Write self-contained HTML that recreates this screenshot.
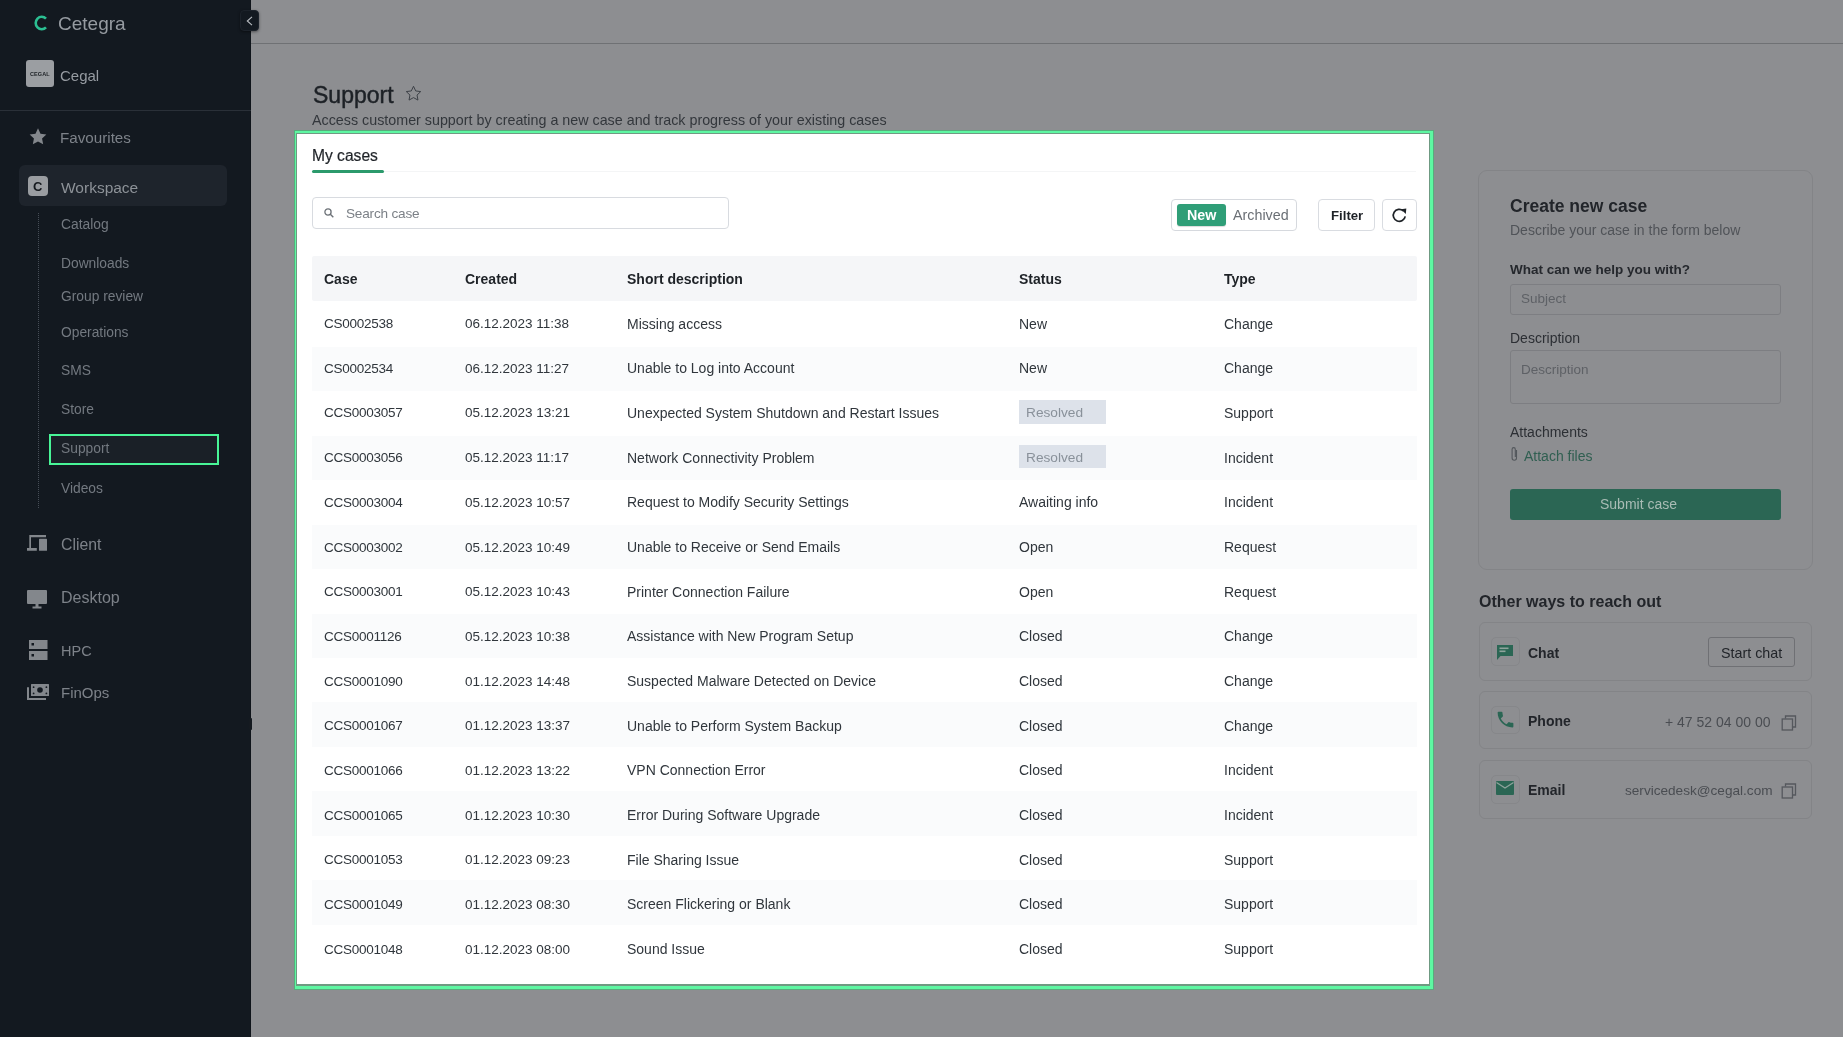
<!DOCTYPE html>
<html><head><meta charset="utf-8"><title>Support</title>
<style>
html,body{margin:0;padding:0;}
body{width:1843px;height:1037px;position:relative;overflow:hidden;background:#8d8e91;font-family:"Liberation Sans",sans-serif;}
.t{position:absolute;line-height:1;white-space:nowrap;-webkit-font-smoothing:antialiased;will-change:transform;}
.r{position:absolute;box-sizing:border-box;}
svg{position:absolute;overflow:visible;}
</style></head><body>
<div class="r" style="left:0.0px;top:0.0px;width:251.0px;height:1037.0px;background:#131920;"></div>
<div class="r" style="left:249.5px;top:0.0px;width:1.5px;height:1037.0px;background:#0f141a;"></div>
<div class="r" style="left:249.0px;top:718.0px;width:2.8px;height:12.0px;background:#151a20;border-radius:1px;"></div>
<svg style="left:34px;top:15px" width="14" height="16" viewBox="0 0 14 16"><path d="M12 3.6 A6 6.3 0 1 0 12 12.4" fill="none" stroke="#2bbf92" stroke-width="2.6"/></svg>
<div class="t" style="left:57.7px;top:14.1px;font-size:19px;color:#969ba1;font-weight:400;">Cetegra</div>
<div class="r" style="left:26.0px;top:60.0px;width:27.5px;height:27.3px;background:#9b9ea2;border-radius:3px;"></div>
<div class="t" style="left:29.5px;top:71.8px;font-size:5.5px;color:#1b1f24;font-weight:700;letter-spacing:0.1px">CEGAL</div>
<div class="t" style="left:60.0px;top:67.9px;font-size:15px;color:#969ba1;font-weight:400;">Cegal</div>
<div class="r" style="left:0.0px;top:110.3px;width:251.0px;height:1.2px;background:#2a3038;"></div>
<svg style="left:28.5px;top:127.5px" width="18" height="17" viewBox="0 0 24 23"><path d="M12 0.5l3.4 7.2 7.9 1-5.8 5.4 1.5 7.8L12 18.1 5 21.9l1.5-7.8L0.7 8.7l7.9-1z" fill="#83878c"/></svg>
<div class="t" style="left:60.2px;top:130.0px;font-size:15.2px;color:#7d8289;font-weight:400;">Favourites</div>
<div class="r" style="left:19.0px;top:165.0px;width:208.0px;height:41.0px;background:#1e242c;border-radius:6px;"></div>
<div class="r" style="left:28.0px;top:176.0px;width:20.0px;height:20.0px;background:#9a9da1;border-radius:4px;"></div>
<div class="t" style="left:32.6px;top:180.2px;font-size:13px;color:#15191e;font-weight:700;">C</div>
<div class="t" style="left:60.6px;top:179.7px;font-size:15.5px;color:#8d9298;font-weight:400;">Workspace</div>
<div class="r" style="left:37.5px;top:213.0px;width:1.0px;height:295.0px;border-left:1px dotted #464d56;"></div>
<div class="r" style="left:49.4px;top:433.5px;width:169.6px;height:31.8px;border:2px solid #48f597;background:#1a2027;"></div>
<div class="t" style="left:61.2px;top:218.4px;font-size:13.8px;color:#737980;font-weight:400;">Catalog</div>
<div class="t" style="left:61.2px;top:256.9px;font-size:13.8px;color:#737980;font-weight:400;">Downloads</div>
<div class="t" style="left:61.2px;top:289.9px;font-size:13.8px;color:#737980;font-weight:400;">Group review</div>
<div class="t" style="left:61.2px;top:326.3px;font-size:13.8px;color:#737980;font-weight:400;">Operations</div>
<div class="t" style="left:61.2px;top:364.3px;font-size:13.8px;color:#737980;font-weight:400;">SMS</div>
<div class="t" style="left:61.2px;top:403.4px;font-size:13.8px;color:#737980;font-weight:400;">Store</div>
<div class="t" style="left:61.2px;top:442.0px;font-size:13.8px;color:#737980;font-weight:400;">Support</div>
<div class="t" style="left:61.2px;top:482.1px;font-size:13.8px;color:#737980;font-weight:400;">Videos</div>
<svg style="left:0;top:0" width="60" height="560" viewBox="0 0 60 560"><path d="M29.3 535h16.7v2.2H31V548h5.8v2.8H27V548h2.3z" fill="#83878c"/><rect x="39" y="538.8" width="8" height="12" rx="0.6" fill="#83878c"/></svg>
<div class="t" style="left:60.7px;top:536.9px;font-size:15.8px;color:#7d8289;font-weight:400;">Client</div>
<svg style="left:27px;top:589.5px" width="20" height="18.5" viewBox="0 0 20 18.5"><rect x="0" y="0" width="20" height="14" rx="1" fill="#83878c"/><rect x="8.5" y="14" width="3" height="3" fill="#83878c"/><rect x="5.5" y="16.5" width="9" height="2" fill="#83878c"/></svg>
<div class="t" style="left:60.7px;top:589.6px;font-size:16px;color:#7d8289;font-weight:400;">Desktop</div>
<svg style="left:29px;top:640px" width="18.5" height="20" viewBox="0 0 18.5 20"><rect x="0" y="0" width="18.5" height="9" fill="#83878c"/><rect x="0" y="11" width="18.5" height="9" fill="#83878c"/><rect x="2.5" y="3" width="2.5" height="2.5" fill="#131920"/><rect x="2.5" y="14" width="2.5" height="2.5" fill="#131920"/></svg>
<div class="t" style="left:61.4px;top:643.8px;font-size:14.5px;color:#7d8289;font-weight:400;">HPC</div>
<svg style="left:0;top:0" width="60" height="710" viewBox="0 0 60 710"><rect x="31" y="684" width="18" height="12" rx="0.5" fill="#83878c"/><circle cx="40" cy="690" r="2.8" fill="#131920"/><circle cx="33.6" cy="687.2" r="0.9" fill="#131920"/><circle cx="46.4" cy="687.2" r="0.9" fill="#131920"/><circle cx="33.6" cy="693.4" r="0.9" fill="#131920"/><circle cx="46.4" cy="693.4" r="0.9" fill="#131920"/><path d="M27 687.2h2V698h17v2H27z" fill="#83878c"/></svg>
<div class="t" style="left:61.4px;top:685.3px;font-size:15px;color:#7d8289;font-weight:400;">FinOps</div>
<div class="r" style="left:239.5px;top:10.0px;width:19.5px;height:21.0px;background:#131920;border-radius:4px;border:1px solid #1c222a;box-shadow:0 1px 3px rgba(0,0,0,0.45);"></div>
<svg style="left:245px;top:15px" width="8" height="11" viewBox="0 0 8 11"><path d="M7 1.8L2.3 6 7 10.2" fill="none" stroke="#b9bdc2" stroke-width="1.1"/></svg>
<div class="r" style="left:251.0px;top:43.0px;width:1592.0px;height:1.0px;background:#6f7174;"></div>
<div class="t" style="left:312.5px;top:83.5px;font-size:23px;color:#1d2126;font-weight:400;-webkit-text-stroke:0.45px #1d2126;">Support</div>
<svg style="left:404.5px;top:85px" width="17" height="17" viewBox="0 0 24 24"><path d="M12 1.8l3.1 6.6 7.1.9-5.2 4.9 1.3 7.1L12 17.8l-6.3 3.5 1.3-7.1L1.8 9.3l7.1-.9z" fill="none" stroke="#3c4046" stroke-width="1.4" stroke-linejoin="round"/></svg>
<div class="t" style="left:312.3px;top:113.1px;font-size:14.3px;color:#33373c;font-weight:400;">Access customer support by creating a new case and track progress of your existing cases</div>
<div class="r" style="left:1478.3px;top:170.3px;width:334.4px;height:399.3px;border:1px solid #838487;border-radius:9px;"></div>
<div class="t" style="left:1509.6px;top:198.3px;font-size:17.5px;color:#22252a;font-weight:700;">Create new case</div>
<div class="t" style="left:1509.6px;top:223.1px;font-size:14px;color:#505358;font-weight:400;">Describe your case in the form below</div>
<div class="t" style="left:1509.6px;top:262.9px;font-size:13.5px;color:#25282d;font-weight:700;">What can we help you with?</div>
<div class="r" style="left:1509.6px;top:283.8px;width:271.1px;height:31.2px;border:1px solid #7d7e82;border-radius:3px;"></div>
<div class="t" style="left:1520.6px;top:292.2px;font-size:13.5px;color:#5e6166;font-weight:400;">Subject</div>
<div class="t" style="left:1509.6px;top:330.6px;font-size:14px;color:#2c2f34;font-weight:400;">Description</div>
<div class="r" style="left:1509.6px;top:349.8px;width:271.1px;height:54.6px;border:1px solid #7d7e82;border-radius:3px;"></div>
<div class="t" style="left:1520.6px;top:362.9px;font-size:13.5px;color:#5e6166;font-weight:400;">Description</div>
<div class="t" style="left:1509.6px;top:424.7px;font-size:14px;color:#2c2f34;font-weight:400;">Attachments</div>
<svg style="left:1509.5px;top:446px" width="9" height="16" viewBox="0 0 9 16"><path d="M6.5 4v8a2.2 2.2 0 0 1-4.4 0V3.2a1.6 1.6 0 0 1 3.2 0V11" fill="none" stroke="#53575c" stroke-width="1.1"/></svg>
<div class="t" style="left:1524.3px;top:448.5px;font-size:14px;color:#305f51;font-weight:400;">Attach files</div>
<div class="r" style="left:1509.9px;top:488.6px;width:271.1px;height:31.1px;background:#2b6654;border-radius:3px;"></div>
<div class="t" style="left:1600.0px;top:497.4px;font-size:14px;color:#a9bcb5;font-weight:400;">Submit case</div>
<div class="t" style="left:1478.6px;top:593.7px;font-size:16px;color:#22252a;font-weight:700;">Other ways to reach out</div>
<div class="r" style="left:1478.6px;top:621.8px;width:333.9px;height:59.4px;border:1px solid #838487;border-radius:6px;"></div>
<div class="r" style="left:1491.3px;top:637.1px;width:28.3px;height:28.8px;border:1px solid #86878a;border-radius:5px;"></div>
<div class="r" style="left:1478.6px;top:690.7px;width:333.9px;height:58.8px;border:1px solid #838487;border-radius:6px;"></div>
<div class="r" style="left:1491.3px;top:705.7px;width:28.3px;height:28.8px;border:1px solid #86878a;border-radius:5px;"></div>
<div class="r" style="left:1478.6px;top:759.5px;width:333.9px;height:59.4px;border:1px solid #838487;border-radius:6px;"></div>
<div class="r" style="left:1491.3px;top:774.8px;width:28.3px;height:28.8px;border:1px solid #86878a;border-radius:5px;"></div>
<div class="t" style="left:1527.7px;top:645.8px;font-size:14px;color:#22252a;font-weight:700;">Chat</div>
<div class="r" style="left:1708.0px;top:637.0px;width:87.2px;height:30.2px;border:1px solid #6f7074;border-radius:3px;"></div>
<div class="t" style="left:1720.5px;top:645.6px;font-size:14.3px;color:#22252a;font-weight:400;">Start chat</div>
<svg style="left:1496px;top:644px" width="18" height="17" viewBox="0 0 18 17"><path d="M1 1h16v11H4.5L1 16z" fill="#2b6654"/><rect x="3.5" y="3.5" width="9" height="1.6" fill="#8fa39c"/><rect x="3.5" y="6.5" width="6" height="1.6" fill="#8fa39c"/></svg>
<div class="t" style="left:1527.7px;top:714.1px;font-size:14px;color:#22252a;font-weight:700;">Phone</div>
<div class="t" style="left:1665.4px;top:714.6px;font-size:14px;color:#4a4d52;font-weight:400;">+ 47 52 04 00 00</div>
<svg style="left:1495px;top:709px" width="21" height="21" viewBox="0 0 24 24"><path d="M6.6 10.8c1.4 2.8 3.8 5.1 6.6 6.6l2.2-2.2c.3-.3.7-.4 1-.2 1.1.4 2.3.6 3.6.6.6 0 1 .4 1 1V20c0 .6-.4 1-1 1C10.6 21 3 13.4 3 4c0-.6.4-1 1-1h3.5c.6 0 1 .4 1 1 0 1.2.2 2.4.6 3.6.1.3 0 .7-.2 1z" fill="#2b6654"/></svg>
<div class="t" style="left:1527.7px;top:782.9px;font-size:14px;color:#22252a;font-weight:700;">Email</div>
<div class="t" style="left:1624.9px;top:783.8px;font-size:13.6px;color:#4a4d52;font-weight:400;">servicedesk@cegal.com</div>
<svg style="left:1496px;top:781px" width="18" height="14" viewBox="0 0 18 14"><rect x="0" y="0" width="18" height="14" rx="1" fill="#2b6654"/><path d="M0.5 1.5L9 7l8.5-5.5" fill="none" stroke="#8fa39c" stroke-width="1.3"/></svg>
<svg style="left:1780.6px;top:715px" width="16" height="16" viewBox="0 0 16 16"><path d="M4.5 3.5V1h10v11h-2.5" fill="none" stroke="#55585d" stroke-width="1.3"/><rect x="1.2" y="4" width="10.3" height="11" fill="none" stroke="#55585d" stroke-width="1.3"/></svg>
<svg style="left:1780.6px;top:783px" width="16" height="16" viewBox="0 0 16 16"><path d="M4.5 3.5V1h10v11h-2.5" fill="none" stroke="#55585d" stroke-width="1.3"/><rect x="1.2" y="4" width="10.3" height="11" fill="none" stroke="#55585d" stroke-width="1.3"/></svg>
<div class="r" style="left:294.0px;top:130.0px;width:1140.0px;height:860.0px;background:#58ab7c;"></div>
<div class="r" style="left:294.6px;top:130.8px;width:1138.8px;height:858.4px;background:#5ef7a2;"></div>
<div class="r" style="left:296.0px;top:133.0px;width:1134.0px;height:853.0px;background:#6f9a82;"></div>
<div class="r" style="left:297.0px;top:134.0px;width:1132.0px;height:850.0px;background:#ffffff;"></div>
<div class="t" style="left:312.3px;top:147.5px;font-size:15.6px;color:#1e2227;font-weight:400;-webkit-text-stroke:0.2px #1e2227;">My cases</div>
<div class="r" style="left:384.0px;top:171.0px;width:1032.0px;height:1.0px;background:#f4f5f6;"></div>
<div class="r" style="left:312.0px;top:170.0px;width:72.0px;height:3.0px;background:#2b9a6c;border-radius:1.5px;"></div>
<div class="r" style="left:312.0px;top:197.0px;width:416.5px;height:31.5px;border:1px solid #d8dbe0;border-radius:4px;"></div>
<svg style="left:324px;top:208px" width="10" height="10" viewBox="0 0 10 10"><circle cx="4" cy="4" r="3.1" fill="none" stroke="#6d7278" stroke-width="1.3"/><path d="M6.3 6.3L9.3 9.3" stroke="#6d7278" stroke-width="1.4"/></svg>
<div class="t" style="left:345.8px;top:207.1px;font-size:13.6px;color:#7c8187;font-weight:400;letter-spacing:-0.2px;">Search case</div>
<div class="r" style="left:1171.4px;top:199.1px;width:126.1px;height:31.6px;border:1px solid #d6d9de;border-radius:4px;"></div>
<div class="r" style="left:1176.7px;top:204.0px;width:49.7px;height:21.7px;background:#2f9e77;border-radius:3px;box-shadow:0 1px 1px rgba(0,0,0,0.15);"></div>
<div class="t" style="left:1187.3px;top:207.7px;font-size:14.3px;color:#ffffff;font-weight:700;">New</div>
<div class="t" style="left:1232.9px;top:207.7px;font-size:14.3px;color:#6a6f75;font-weight:400;">Archived</div>
<div class="r" style="left:1318.0px;top:199.1px;width:56.5px;height:31.6px;border:1px solid #d9dce1;border-radius:4px;"></div>
<div class="t" style="left:1330.6px;top:208.8px;font-size:13.2px;color:#1e2227;font-weight:700;">Filter</div>
<div class="r" style="left:1382.1px;top:199.1px;width:34.7px;height:31.6px;border:1px solid #d9dce1;border-radius:4px;"></div>
<svg style="left:1392px;top:208px" width="15" height="15" viewBox="0 0 15 15"><path d="M13.2 8.3A6 6 0 1 1 11.3 2.9" fill="none" stroke="#1e2227" stroke-width="1.7"/><path d="M9 1.2L14.3 0.6 13.8 5.9z" fill="#1e2227"/></svg>
<div class="r" style="left:312.0px;top:256.0px;width:1104.5px;height:45.0px;background:#f5f6f8;border-radius:2px;"></div>
<div class="t" style="left:324.4px;top:272.3px;font-size:14px;color:#1e2227;font-weight:700;">Case</div>
<div class="t" style="left:465.3px;top:272.3px;font-size:14px;color:#1e2227;font-weight:700;">Created</div>
<div class="t" style="left:627.4px;top:272.3px;font-size:14px;color:#1e2227;font-weight:700;">Short description</div>
<div class="t" style="left:1018.6px;top:272.3px;font-size:14px;color:#1e2227;font-weight:700;">Status</div>
<div class="t" style="left:1224.0px;top:272.3px;font-size:14px;color:#1e2227;font-weight:700;">Type</div>
<div class="t" style="left:324.4px;top:317.1px;font-size:13.5px;color:#30363c;font-weight:400;letter-spacing:-0.25px;">CS0002538</div>
<div class="t" style="left:465.3px;top:317.1px;font-size:13.5px;color:#30363c;font-weight:400;">06.12.2023 11:38</div>
<div class="t" style="left:627.4px;top:316.7px;font-size:14px;color:#30363c;font-weight:400;">Missing access</div>
<div class="t" style="left:1018.6px;top:316.7px;font-size:14px;color:#30363c;font-weight:400;">New</div>
<div class="t" style="left:1224.0px;top:316.7px;font-size:14px;color:#30363c;font-weight:400;">Change</div>
<div class="r" style="left:312.0px;top:346.6px;width:1104.5px;height:44.7px;background:#fafbfc;"></div>
<div class="t" style="left:324.4px;top:361.8px;font-size:13.5px;color:#30363c;font-weight:400;letter-spacing:-0.25px;">CS0002534</div>
<div class="t" style="left:465.3px;top:361.8px;font-size:13.5px;color:#30363c;font-weight:400;">06.12.2023 11:27</div>
<div class="t" style="left:627.4px;top:361.4px;font-size:14px;color:#30363c;font-weight:400;">Unable to Log into Account</div>
<div class="t" style="left:1018.6px;top:361.4px;font-size:14px;color:#30363c;font-weight:400;">New</div>
<div class="t" style="left:1224.0px;top:361.4px;font-size:14px;color:#30363c;font-weight:400;">Change</div>
<div class="t" style="left:324.4px;top:406.4px;font-size:13.5px;color:#30363c;font-weight:400;letter-spacing:-0.25px;">CCS0003057</div>
<div class="t" style="left:465.3px;top:406.4px;font-size:13.5px;color:#30363c;font-weight:400;">05.12.2023 13:21</div>
<div class="t" style="left:627.4px;top:406.0px;font-size:14px;color:#30363c;font-weight:400;">Unexpected System Shutdown and Restart Issues</div>
<div class="r" style="left:1019.0px;top:400.2px;width:86.8px;height:23.5px;background:#dde2ea;"></div>
<div class="t" style="left:1025.8px;top:406.3px;font-size:13.7px;color:#89919a;font-weight:400;">Resolved</div>
<div class="t" style="left:1224.0px;top:406.0px;font-size:14px;color:#30363c;font-weight:400;">Support</div>
<div class="r" style="left:312.0px;top:435.6px;width:1104.5px;height:44.7px;background:#fafbfc;"></div>
<div class="t" style="left:324.4px;top:451.1px;font-size:13.5px;color:#30363c;font-weight:400;letter-spacing:-0.25px;">CCS0003056</div>
<div class="t" style="left:465.3px;top:451.1px;font-size:13.5px;color:#30363c;font-weight:400;">05.12.2023 11:17</div>
<div class="t" style="left:627.4px;top:450.7px;font-size:14px;color:#30363c;font-weight:400;">Network Connectivity Problem</div>
<div class="r" style="left:1019.0px;top:444.8px;width:86.8px;height:23.5px;background:#dde2ea;"></div>
<div class="t" style="left:1025.8px;top:450.9px;font-size:13.7px;color:#89919a;font-weight:400;">Resolved</div>
<div class="t" style="left:1224.0px;top:450.7px;font-size:14px;color:#30363c;font-weight:400;">Incident</div>
<div class="t" style="left:324.4px;top:495.8px;font-size:13.5px;color:#30363c;font-weight:400;letter-spacing:-0.25px;">CCS0003004</div>
<div class="t" style="left:465.3px;top:495.8px;font-size:13.5px;color:#30363c;font-weight:400;">05.12.2023 10:57</div>
<div class="t" style="left:627.4px;top:495.4px;font-size:14px;color:#30363c;font-weight:400;">Request to Modify Security Settings</div>
<div class="t" style="left:1018.6px;top:495.4px;font-size:14px;color:#30363c;font-weight:400;">Awaiting info</div>
<div class="t" style="left:1224.0px;top:495.4px;font-size:14px;color:#30363c;font-weight:400;">Incident</div>
<div class="r" style="left:312.0px;top:524.5px;width:1104.5px;height:44.7px;background:#fafbfc;"></div>
<div class="t" style="left:324.4px;top:540.5px;font-size:13.5px;color:#30363c;font-weight:400;letter-spacing:-0.25px;">CCS0003002</div>
<div class="t" style="left:465.3px;top:540.5px;font-size:13.5px;color:#30363c;font-weight:400;">05.12.2023 10:49</div>
<div class="t" style="left:627.4px;top:540.0px;font-size:14px;color:#30363c;font-weight:400;">Unable to Receive or Send Emails</div>
<div class="t" style="left:1018.6px;top:540.0px;font-size:14px;color:#30363c;font-weight:400;">Open</div>
<div class="t" style="left:1224.0px;top:540.0px;font-size:14px;color:#30363c;font-weight:400;">Request</div>
<div class="t" style="left:324.4px;top:585.1px;font-size:13.5px;color:#30363c;font-weight:400;letter-spacing:-0.25px;">CCS0003001</div>
<div class="t" style="left:465.3px;top:585.1px;font-size:13.5px;color:#30363c;font-weight:400;">05.12.2023 10:43</div>
<div class="t" style="left:627.4px;top:584.7px;font-size:14px;color:#30363c;font-weight:400;">Printer Connection Failure</div>
<div class="t" style="left:1018.6px;top:584.7px;font-size:14px;color:#30363c;font-weight:400;">Open</div>
<div class="t" style="left:1224.0px;top:584.7px;font-size:14px;color:#30363c;font-weight:400;">Request</div>
<div class="r" style="left:312.0px;top:613.5px;width:1104.5px;height:44.7px;background:#fafbfc;"></div>
<div class="t" style="left:324.4px;top:629.8px;font-size:13.5px;color:#30363c;font-weight:400;letter-spacing:-0.25px;">CCS0001126</div>
<div class="t" style="left:465.3px;top:629.8px;font-size:13.5px;color:#30363c;font-weight:400;">05.12.2023 10:38</div>
<div class="t" style="left:627.4px;top:629.4px;font-size:14px;color:#30363c;font-weight:400;">Assistance with New Program Setup</div>
<div class="t" style="left:1018.6px;top:629.4px;font-size:14px;color:#30363c;font-weight:400;">Closed</div>
<div class="t" style="left:1224.0px;top:629.4px;font-size:14px;color:#30363c;font-weight:400;">Change</div>
<div class="t" style="left:324.4px;top:674.5px;font-size:13.5px;color:#30363c;font-weight:400;letter-spacing:-0.25px;">CCS0001090</div>
<div class="t" style="left:465.3px;top:674.5px;font-size:13.5px;color:#30363c;font-weight:400;">01.12.2023 14:48</div>
<div class="t" style="left:627.4px;top:674.0px;font-size:14px;color:#30363c;font-weight:400;">Suspected Malware Detected on Device</div>
<div class="t" style="left:1018.6px;top:674.0px;font-size:14px;color:#30363c;font-weight:400;">Closed</div>
<div class="t" style="left:1224.0px;top:674.0px;font-size:14px;color:#30363c;font-weight:400;">Change</div>
<div class="r" style="left:312.0px;top:702.4px;width:1104.5px;height:44.7px;background:#fafbfc;"></div>
<div class="t" style="left:324.4px;top:719.1px;font-size:13.5px;color:#30363c;font-weight:400;letter-spacing:-0.25px;">CCS0001067</div>
<div class="t" style="left:465.3px;top:719.1px;font-size:13.5px;color:#30363c;font-weight:400;">01.12.2023 13:37</div>
<div class="t" style="left:627.4px;top:718.7px;font-size:14px;color:#30363c;font-weight:400;">Unable to Perform System Backup</div>
<div class="t" style="left:1018.6px;top:718.7px;font-size:14px;color:#30363c;font-weight:400;">Closed</div>
<div class="t" style="left:1224.0px;top:718.7px;font-size:14px;color:#30363c;font-weight:400;">Change</div>
<div class="t" style="left:324.4px;top:763.8px;font-size:13.5px;color:#30363c;font-weight:400;letter-spacing:-0.25px;">CCS0001066</div>
<div class="t" style="left:465.3px;top:763.8px;font-size:13.5px;color:#30363c;font-weight:400;">01.12.2023 13:22</div>
<div class="t" style="left:627.4px;top:763.4px;font-size:14px;color:#30363c;font-weight:400;">VPN Connection Error</div>
<div class="t" style="left:1018.6px;top:763.4px;font-size:14px;color:#30363c;font-weight:400;">Closed</div>
<div class="t" style="left:1224.0px;top:763.4px;font-size:14px;color:#30363c;font-weight:400;">Incident</div>
<div class="r" style="left:312.0px;top:791.4px;width:1104.5px;height:44.7px;background:#fafbfc;"></div>
<div class="t" style="left:324.4px;top:808.5px;font-size:13.5px;color:#30363c;font-weight:400;letter-spacing:-0.25px;">CCS0001065</div>
<div class="t" style="left:465.3px;top:808.5px;font-size:13.5px;color:#30363c;font-weight:400;">01.12.2023 10:30</div>
<div class="t" style="left:627.4px;top:808.1px;font-size:14px;color:#30363c;font-weight:400;">Error During Software Upgrade</div>
<div class="t" style="left:1018.6px;top:808.1px;font-size:14px;color:#30363c;font-weight:400;">Closed</div>
<div class="t" style="left:1224.0px;top:808.1px;font-size:14px;color:#30363c;font-weight:400;">Incident</div>
<div class="t" style="left:324.4px;top:853.1px;font-size:13.5px;color:#30363c;font-weight:400;letter-spacing:-0.25px;">CCS0001053</div>
<div class="t" style="left:465.3px;top:853.1px;font-size:13.5px;color:#30363c;font-weight:400;">01.12.2023 09:23</div>
<div class="t" style="left:627.4px;top:852.7px;font-size:14px;color:#30363c;font-weight:400;">File Sharing Issue</div>
<div class="t" style="left:1018.6px;top:852.7px;font-size:14px;color:#30363c;font-weight:400;">Closed</div>
<div class="t" style="left:1224.0px;top:852.7px;font-size:14px;color:#30363c;font-weight:400;">Support</div>
<div class="r" style="left:312.0px;top:880.3px;width:1104.5px;height:44.7px;background:#fafbfc;"></div>
<div class="t" style="left:324.4px;top:897.8px;font-size:13.5px;color:#30363c;font-weight:400;letter-spacing:-0.25px;">CCS0001049</div>
<div class="t" style="left:465.3px;top:897.8px;font-size:13.5px;color:#30363c;font-weight:400;">01.12.2023 08:30</div>
<div class="t" style="left:627.4px;top:897.4px;font-size:14px;color:#30363c;font-weight:400;">Screen Flickering or Blank</div>
<div class="t" style="left:1018.6px;top:897.4px;font-size:14px;color:#30363c;font-weight:400;">Closed</div>
<div class="t" style="left:1224.0px;top:897.4px;font-size:14px;color:#30363c;font-weight:400;">Support</div>
<div class="t" style="left:324.4px;top:942.5px;font-size:13.5px;color:#30363c;font-weight:400;letter-spacing:-0.25px;">CCS0001048</div>
<div class="t" style="left:465.3px;top:942.5px;font-size:13.5px;color:#30363c;font-weight:400;">01.12.2023 08:00</div>
<div class="t" style="left:627.4px;top:942.1px;font-size:14px;color:#30363c;font-weight:400;">Sound Issue</div>
<div class="t" style="left:1018.6px;top:942.1px;font-size:14px;color:#30363c;font-weight:400;">Closed</div>
<div class="t" style="left:1224.0px;top:942.1px;font-size:14px;color:#30363c;font-weight:400;">Support</div>
</body></html>
